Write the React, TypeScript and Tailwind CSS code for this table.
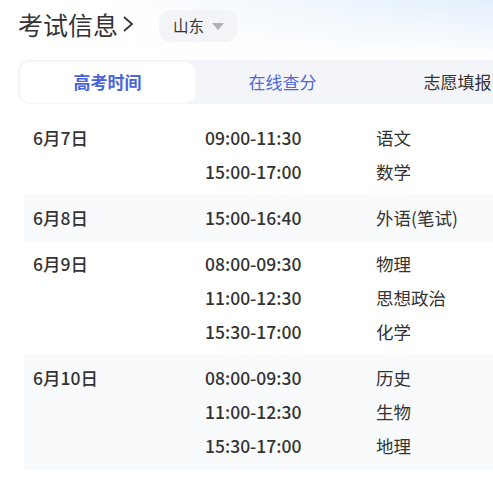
import React from "react";

const rows = [
  { date: "6月7日", items: [["09:00-11:30", "语文"], ["15:00-17:00", "数学"]], gray: false },
  { date: "6月8日", items: [["15:00-16:40", "外语(笔试)"]], gray: true },
  { date: "6月9日", items: [["08:00-09:30", "物理"], ["11:00-12:30", "思想政治"], ["15:30-17:00", "化学"]], gray: false },
  { date: "6月10日", items: [["08:00-09:30", "历史"], ["11:00-12:30", "生物"], ["15:30-17:00", "地理"]], gray: true },
];

export default function App() {
  return (
    <div className="w-[493px] h-[493px] overflow-hidden bg-white text-[#333] font-['Noto_Sans_CJK_SC','Noto_Sans',sans-serif]">
      <div className="h-[60px] flex items-start pt-[8px] pl-[18px] bg-[linear-gradient(to_bottom,rgba(255,255,255,0),#ffffff),linear-gradient(to_right,#ffffff_20%,#e2effb)]">
        <div className="flex items-center h-[32px]">
          <span className="text-[25px] leading-none text-[#333]">考试信息</span>
          <svg width="14" height="20" viewBox="0 0 14 20" className="ml-[3px]">
            <path d="M3 3 L11 10 L3 17" fill="none" stroke="#333" strokeWidth="1.8" />
          </svg>
        </div>
        <div className="ml-[24px] mt-[2px] h-[32px] w-[78px] rounded-[12px] bg-[#f3f4f7] flex items-center pl-[14px]">
          <span className="text-[15.5px] leading-none text-[#333]">山东</span>
          <svg width="12" height="7" viewBox="0 0 12 7" className="ml-[8px]">
            <path d="M0 0 L12 0 L6 7 Z" fill="#b0b2b8" />
          </svg>
        </div>
      </div>
      <div className="ml-[18px] h-[44px] bg-[#f4f5f8] rounded-l-[12px] flex items-center pl-[2px]">
        <div className="w-[175px] h-[41px] shrink-0 bg-white rounded-[10px] flex items-center justify-center text-[17px] font-bold text-[#4863d8]">
          高考时间
        </div>
        <div className="w-[175px] h-[41px] shrink-0 flex items-center justify-center text-[17px] text-[#4b6ad9]">
          在线查分
        </div>
        <div className="w-[175px] h-[41px] shrink-0 flex items-center justify-center text-[17px] text-[#333]">
          志愿填报
        </div>
      </div>
      <div className="mt-[11px] ml-[24px]">
        {rows.map((r) => (
          <div
            key={r.date}
            className={`grid grid-cols-[172px_171px_1fr] pl-[9px] py-[6px] text-[17.5px] leading-[34px] ${r.gray ? "bg-[#f9fafc]" : "bg-white"}`}
          >
            <div className="font-medium">{r.date}</div>
            <div className="flex flex-col font-medium">
              {r.items.map((it) => (
                <span key={it[0]}>{it[0]}</span>
              ))}
            </div>
            <div className="flex flex-col">
              {r.items.map((it) => (
                <span key={it[0]}>{it[1]}</span>
              ))}
            </div>
          </div>
        ))}
      </div>
    </div>
  );
}
